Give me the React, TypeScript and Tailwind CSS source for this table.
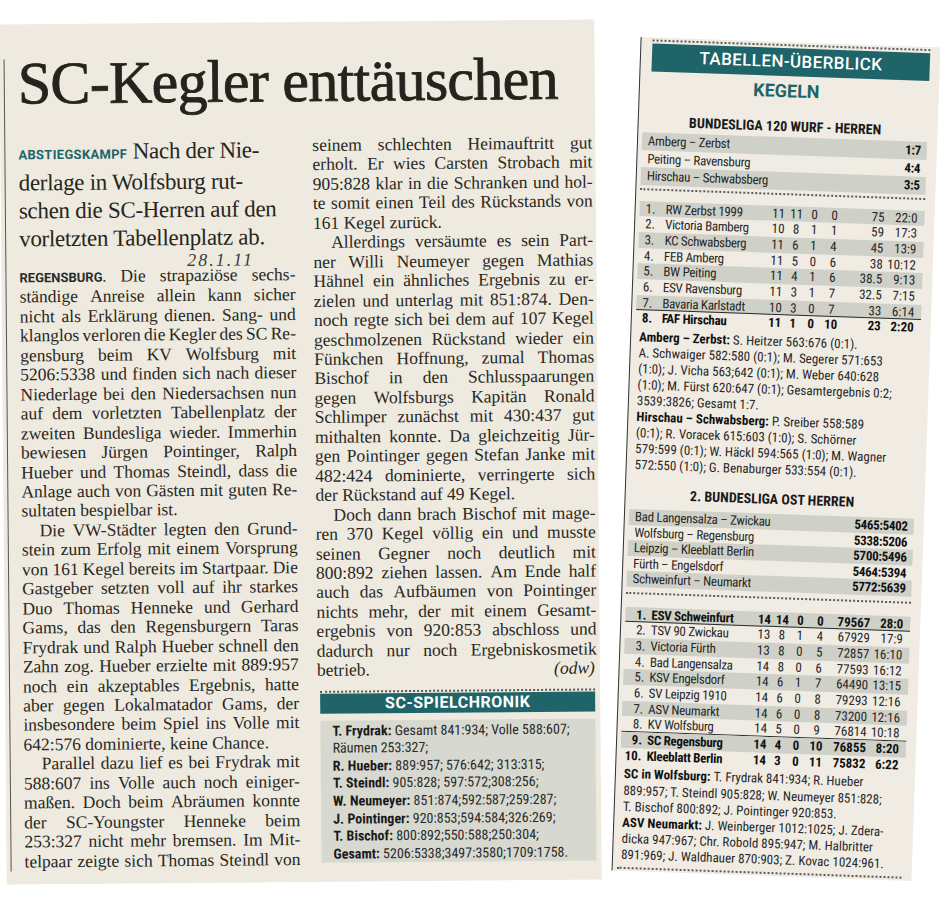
import React from 'react';

const SERIF = "font-['Liberation_Serif','Times_New_Roman',serif]";
const SANS = "font-['Roboto','Liberation_Sans',sans-serif]";
const COND = "font-['Roboto_Condensed','Liberation_Sans_Narrow','DejaVu_Sans_Condensed','Roboto',sans-serif]";

type BodyLine = { t: string; lead?: string; indent?: boolean; last?: boolean; sign?: string };

const leftBody: BodyLine[] = [
  { lead: 'REGENSBURG.', t: 'Die strapaziöse sechs-' },
  { t: 'ständige Anreise allein kann sicher' },
  { t: 'nicht als Erklärung dienen. Sang- und' },
  { t: 'klanglos verloren die Kegler des SC Re-' },
  { t: 'gensburg beim KV Wolfsburg mit' },
  { t: '5206:5338 und finden sich nach dieser' },
  { t: 'Niederlage bei den Niedersachsen nun' },
  { t: 'auf dem vorletzten Tabellenplatz der' },
  { t: 'zweiten Bundesliga wieder. Immerhin' },
  { t: 'bewiesen Jürgen Pointinger, Ralph' },
  { t: 'Hueber und Thomas Steindl, dass die' },
  { t: 'Anlage auch von Gästen mit guten Re-' },
  { t: 'sultaten bespielbar ist.', last: true },
  { t: 'Die VW-Städter legten den Grund-', indent: true },
  { t: 'stein zum Erfolg mit einem Vorsprung' },
  { t: 'von 161 Kegel bereits im Startpaar. Die' },
  { t: 'Gastgeber setzten voll auf ihr starkes' },
  { t: 'Duo Thomas Henneke und Gerhard' },
  { t: 'Gams, das den Regensburgern Taras' },
  { t: 'Frydrak und Ralph Hueber schnell den' },
  { t: 'Zahn zog. Hueber erzielte mit 889:957' },
  { t: 'noch ein akzeptables Ergebnis, hatte' },
  { t: 'aber gegen Lokalmatador Gams, der' },
  { t: 'insbesondere beim Spiel ins Volle mit' },
  { t: '642:576 dominierte, keine Chance.', last: true },
  { t: 'Parallel dazu lief es bei Frydrak mit', indent: true },
  { t: '588:607 ins Volle auch noch einiger-' },
  { t: 'maßen. Doch beim Abräumen konnte' },
  { t: 'der SC-Youngster Henneke beim' },
  { t: '253:327 nicht mehr bremsen. Im Mit-' },
  { t: 'telpaar zeigte sich Thomas Steindl von' },
];

const rightBody: BodyLine[] = [
  { t: 'seinem schlechten Heimauftritt gut' },
  { t: 'erholt. Er wies Carsten Strobach mit' },
  { t: '905:828 klar in die Schranken und hol-' },
  { t: 'te somit einen Teil des Rückstands von' },
  { t: '161 Kegel zurück.', last: true },
  { t: 'Allerdings versäumte es sein Part-', indent: true },
  { t: 'ner Willi Neumeyer gegen Mathias' },
  { t: 'Hähnel ein ähnliches Ergebnis zu er-' },
  { t: 'zielen und unterlag mit 851:874. Den-' },
  { t: 'noch regte sich bei dem auf 107 Kegel' },
  { t: 'geschmolzenen Rückstand wieder ein' },
  { t: 'Fünkchen Hoffnung, zumal Thomas' },
  { t: 'Bischof in den Schlusspaarungen' },
  { t: 'gegen Wolfsburgs Kapitän Ronald' },
  { t: 'Schlimper zunächst mit 430:437 gut' },
  { t: 'mithalten konnte. Da gleichzeitig Jür-' },
  { t: 'gen Pointinger gegen Stefan Janke mit' },
  { t: '482:424 dominierte, verringerte sich' },
  { t: 'der Rückstand auf 49 Kegel.', last: true },
  { t: 'Doch dann brach Bischof mit mage-', indent: true },
  { t: 'ren 370 Kegel völlig ein und musste' },
  { t: 'seinen Gegner noch deutlich mit' },
  { t: '800:892 ziehen lassen. Am Ende half' },
  { t: 'auch das Aufbäumen von Pointinger' },
  { t: 'nichts mehr, der mit einem Gesamt-' },
  { t: 'ergebnis von 920:853 abschloss und' },
  { t: 'dadurch nur noch Ergebniskosmetik' },
  { t: 'betrieb.', sign: '(odw)' },
];

const Line = ({ line }: { line: BodyLine }) => {
  const lead = line.lead ? (
    <span className={`${SANS} text-[13px] font-bold text-[#2b2b2b]`}>{line.lead} </span>
  ) : null;

  if (line.last) {
    return (
      <div className={`whitespace-nowrap ${line.indent ? 'pl-[18px]' : ''}`}>
        {lead}
        {line.t}
      </div>
    );
  }

  if (line.sign) {
    return (
      <div className="flex justify-between">
        <span>{line.t} </span>
        <span className="pr-[2px] italic">{line.sign}</span>
      </div>
    );
  }

  const words = line.t.split(' ');
  return (
    <div className={`flex items-baseline justify-between whitespace-nowrap ${line.indent ? 'pl-[18px]' : ''}`}>
      {lead}
      {words.map((w, i) => (
        <span key={i}>
          {w}
          {i < words.length - 1 ? ' ' : ''}
        </span>
      ))}
    </div>
  );
};

const chronik: [string, string][] = [
  ['T. Frydrak:', ' Gesamt 841:934; Volle 588:607;'],
  ['', 'Räumen 253:327;'],
  ['R. Hueber:', ' 889:957; 576:642; 313:315;'],
  ['T. Steindl:', ' 905:828; 597:572;308:256;'],
  ['W. Neumeyer:', ' 851:874;592:587;259:287;'],
  ['J. Pointinger:', ' 920:853;594:584;326:269;'],
  ['T. Bischof:', ' 800:892;550:588;250:304;'],
  ['Gesamt:', ' 5206:5338;3497:3580;1709:1758.'],
];

const Dotted = ({ className = '' }: { className?: string }) => (
  <div className={`h-0 border-t-[2px] border-dotted border-[#5a5a5a] ${className}`} />
);

type Row = { r: string; team: string; g: string; w: string; d: string; l: string; p: string; s: string; band?: boolean; bold?: boolean; line?: boolean };

const table1: Row[] = [
  { r: '1.', team: 'RW Zerbst 1999', g: '11', w: '11', d: '0', l: '0', p: '75', s: '22:0', band: true },
  { r: '2.', team: 'Victoria Bamberg', g: '10', w: '8', d: '1', l: '1', p: '59', s: '17:3' },
  { r: '3.', team: 'KC Schwabsberg', g: '11', w: '6', d: '1', l: '4', p: '45', s: '13:9', band: true },
  { r: '4.', team: 'FEB Amberg', g: '11', w: '5', d: '0', l: '6', p: '38', s: '10:12' },
  { r: '5.', team: 'BW Peiting', g: '11', w: '4', d: '1', l: '6', p: '38.5', s: '9:13', band: true },
  { r: '6.', team: 'ESV Ravensburg', g: '11', w: '3', d: '1', l: '7', p: '32.5', s: '7:15' },
  { r: '7.', team: 'Bavaria Karlstadt', g: '10', w: '3', d: '0', l: '7', p: '33', s: '6:14', band: true, line: true },
  { r: '8.', team: 'FAF Hirschau', g: '11', w: '1', d: '0', l: '10', p: '23', s: '2:20', bold: true },
];

const table2: Row[] = [
  { r: '1.', team: 'ESV Schweinfurt', g: '14', w: '14', d: '0', l: '0', p: '79567', s: '28:0', band: true, bold: true, line: true },
  { r: '2.', team: 'TSV 90 Zwickau', g: '13', w: '8', d: '1', l: '4', p: '67929', s: '17:9' },
  { r: '3.', team: 'Victoria Fürth', g: '13', w: '8', d: '0', l: '5', p: '72857', s: '16:10', band: true },
  { r: '4.', team: 'Bad Langensalza', g: '14', w: '8', d: '0', l: '6', p: '77593', s: '16:12' },
  { r: '5.', team: 'KSV Engelsdorf', g: '14', w: '6', d: '1', l: '7', p: '64490', s: '13:15', band: true },
  { r: '6.', team: 'SV Leipzig 1910', g: '14', w: '6', d: '0', l: '8', p: '79293', s: '12:16' },
  { r: '7.', team: 'ASV Neumarkt', g: '14', w: '6', d: '0', l: '8', p: '73200', s: '12:16', band: true },
  { r: '8.', team: 'KV Wolfsburg', g: '14', w: '5', d: '0', l: '9', p: '76814', s: '10:18', line: true },
  { r: '9.', team: 'SC Regensburg', g: '14', w: '4', d: '0', l: '10', p: '76855', s: '8:20', band: true, bold: true },
  { r: '10.', team: 'Kleeblatt Berlin', g: '14', w: '3', d: '0', l: '11', p: '75832', s: '6:22', bold: true },
];

const Table = ({ rows, rightRank, rowH }: { rows: Row[]; rightRank?: boolean; rowH: string }) => (
  <div className={`${COND} text-[13px] text-[#262626]`}>
    {rows.map((row) => (
      <div
        key={row.r}
        className={`grid grid-cols-[24px_106px_18px_18px_18px_22px_39px_33px] ${rowH} ${row.band ? 'bg-[#cfd1c8]' : ''} ${row.bold ? 'font-bold text-[#111]' : ''} ${row.line ? 'border-b-[1.5px] border-[#2b2b2b]' : ''}`}
      >
        <span className={rightRank ? 'pr-[3px] text-right' : 'pl-[6px]'}>{row.r}</span>
        <span className="truncate pl-[2px] tracking-[-0.3px]">{row.team}</span>
        <span className="text-center">{row.g}</span>
        <span className="text-center">{row.w}</span>
        <span className="text-center">{row.d}</span>
        <span className="text-center">{row.l}</span>
        <span className="text-right">{row.p}</span>
        <span className="text-right">{row.s}</span>
      </div>
    ))}
  </div>
);

const Results = ({ rows, rowH }: { rows: [string, string][]; rowH: string }) => (
  <div className={`${COND} text-[13px] tracking-[-0.3px] text-[#262626]`}>
    {rows.map(([m, s], i) => (
      <div key={m} className={`flex justify-between pl-[6px] pr-[6px] ${rowH} ${i % 2 === 0 ? 'bg-[#cfd1c8]' : ''}`}>
        <span>{m}</span>
        <span className="font-bold text-[#111]">{s}</span>
      </div>
    ))}
  </div>
);

type Note = { b?: string; t: string };

const Notes = ({ lines, lh }: { lines: Note[]; lh: string }) => (
  <div className={`${COND} text-[13px] text-[#262626] ${lh} whitespace-nowrap pl-[4px]`}>
    {lines.map((n, i) => (
      <div key={i}>
        {n.b && <b className="text-[#111]">{n.b} </b>}
        {n.t}
      </div>
    ))}
  </div>
);

const notes1: Note[] = [
  { b: 'Amberg – Zerbst:', t: 'S. Heitzer 563:676 (0:1).' },
  { t: 'A. Schwaiger 582:580 (0:1); M. Segerer 571:653' },
  { t: '(1:0); J. Vicha 563;642 (0:1); M. Weber 640:628' },
  { t: '(1:0); M. Fürst 620:647 (0:1); Gesamtergebnis 0:2;' },
  { t: '3539:3826; Gesamt 1:7.' },
  { b: 'Hirschau – Schwabsberg:', t: 'P. Sreiber 558:589' },
  { t: '(0:1); R. Voracek 615:603 (1:0); S. Schörner' },
  { t: '579:599 (0:1); W. Häckl 594:565 (1:0); M. Wagner' },
  { t: '572:550 (1:0); G. Benaburger 533:554 (0:1).' },
];

const notes2: Note[] = [
  { b: 'SC in Wolfsburg:', t: 'T. Frydrak 841:934; R. Hueber' },
  { t: '889:957; T. Steindl 905:828; W. Neumeyer 851:828;' },
  { t: 'T. Bischof 800:892; J. Pointinger 920:853.' },
  { b: 'ASV Neumarkt:', t: 'J. Weinberger 1012:1025; J. Zdera-' },
  { t: 'dicka 947:967; Chr. Robold 895:947; M. Halbritter' },
  { t: '891:969; J. Waldhauer 870:903; Z. Kovac 1024:961.' },
];

export default function App() {
  return (
    <div className="flex h-[897px] w-[940px] items-start overflow-hidden bg-white">
      {/* Zeitungsartikel */}
      <div className="ml-[3px] mt-[22px] h-[860px] w-[595px] shrink-0 -rotate-[0.5deg] bg-[#eeeadf] text-[#282723]">
        <div className="ml-[4px] mt-[35px] h-[812px] border-l border-[#555] pl-[13px]">
          <h1 className={`${SERIF} text-[60px] leading-[48px] tracking-[-0.7px] text-[#24231e] [-webkit-text-stroke:0.8px_#24231e]`}>
            SC-Kegler enttäuschen
          </h1>

          <div className={`${SERIF} mt-[31px] grid grid-cols-[276px_280px] gap-x-[18px]`}>
            <div>
              <div className="text-[23px] leading-[28px] tracking-[-0.3px] whitespace-nowrap text-[#262520]">
                <div>
                  <span className={`${SANS} text-[13px] font-bold tracking-[0.3px] text-[#1e6469]`}>ABSTIEGSKAMPF</span>{' '}
                  Nach der Nie-
                </div>
                <div>derlage in Wolfsburg rut-</div>
                <div>schen die SC-Herren auf den</div>
                <div>vorletzten Tabellenplatz ab.</div>
              </div>
              <div className="h-[14px] pl-[168px] text-[18px] leading-[16px] font-light italic tracking-[2px] text-[#3a3a3a]">
                28.1.11
              </div>
              <div className="text-[17.5px] leading-[19.45px]">
                {leftBody.map((l, i) => (
                  <Line key={i} line={l} />
                ))}
              </div>
            </div>

            <div>
              <div className="text-[17.5px] leading-[19.45px]">
                {rightBody.map((l, i) => (
                  <Line key={i} line={l} />
                ))}
              </div>

              <div className="ml-[3px] mt-[10px] w-[275px]">
                <Dotted />
                <div className={`${SANS} mt-[1px] flex h-[20px] items-center justify-center bg-[#1e6469] text-[16px] font-bold tracking-[0.5px] text-white`}>
                  SC-SPIELCHRONIK
                </div>
                <div className={`${COND} mt-[7px] h-[142px] bg-[#d7d9d0] pl-[12px] pt-[2px] text-[14px] leading-[17.6px] whitespace-nowrap text-[#2a2a2a]`}>
                  {chronik.map(([b, t], i) => (
                    <div key={i}>
                      {b && <b className="text-[#1a1a1a]">{b}</b>}
                      {t}
                    </div>
                  ))}
                </div>
              </div>
            </div>
          </div>
        </div>
      </div>

      {/* Tabellen-Überblick */}
      <div className="ml-[28px] mt-[42px] h-[834px] w-[300px] shrink-0 rotate-[2deg] border-l-[1.5px] border-[#333] bg-[#f0ece3] pr-[10px] pl-[4px]">
        <div className="ml-[7px] mt-[2px]">
          <Dotted />
          <div className={`${SANS} mt-[2px] flex h-[28px] items-center justify-center bg-[#1e6469] text-[17px] font-medium tracking-[0.4px] text-white`}>
            TABELLEN-ÜBERBLICK
          </div>
        </div>

        <div className={`${SANS} mt-[5px] text-center text-[18px] leading-[20px] font-bold text-[#1e6469]`}>KEGELN</div>
        <div className={`${COND} mt-[16px] text-center text-[14px] leading-[18px] font-bold text-[#1a1a1a]`}>
          BUNDESLIGA 120 WURF - HERREN
        </div>

        <div className="mt-[2px]">
          <Results
            rowH="h-[17.5px] leading-[17.5px]"
            rows={[
              ['Amberg – Zerbst', '1:7'],
              ['Peiting – Ravensburg', '4:4'],
              ['Hirschau – Schwabsberg', '3:5'],
            ]}
          />
        </div>
        <Dotted className="mt-[3px]" />

        <div className="mt-[11px]">
          <Table rows={table1} rowH="h-[15.7px] leading-[15.7px]" />
        </div>

        <div className="mt-[3px]">
          <Notes lines={notes1} lh="leading-[16px]" />
        </div>

        <div className={`${COND} mt-[12px] text-center text-[14px] leading-[18px] font-bold text-[#1a1a1a]`}>
          2. BUNDESLIGA OST HERREN
        </div>

        <div className="mt-[6px]">
          <Results
            rowH="h-[15.5px] leading-[15.5px]"
            rows={[
              ['Bad Langensalza – Zwickau', '5465:5402'],
              ['Wolfsburg – Regensburg', '5338:5206'],
              ['Leipzig – Kleeblatt Berlin', '5700:5496'],
              ['Fürth – Engelsdorf', '5464:5394'],
              ['Schweinfurt – Neumarkt', '5772:5639'],
            ]}
          />
        </div>
        <Dotted className="mt-[5px]" />

        <div className="mt-[13px]">
          <Table rows={table2} rightRank rowH="h-[15.7px] leading-[15.7px]" />
        </div>

        <div className="mt-[3px]">
          <Notes lines={notes2} lh="leading-[16.2px]" />
        </div>
        <Dotted className="mt-[3px]" />
      </div>
    </div>
  );
}
